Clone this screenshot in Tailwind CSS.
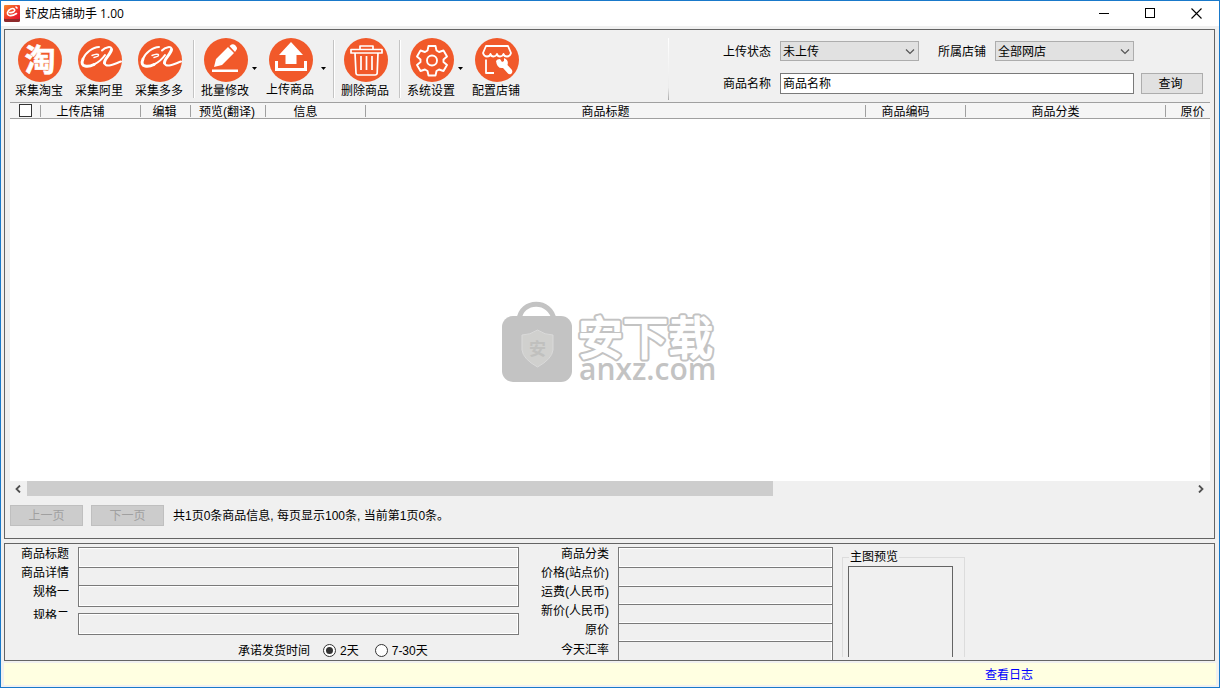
<!DOCTYPE html>
<html lang="zh-CN">
<head>
<meta charset="utf-8">
<title>虾皮店铺助手 1.00</title>
<script src="https://cdn.jsdelivr.net/npm/@tailwindcss/browser@4"></script>
</head>
<body class="flex min-h-screen flex-col border border-[#1979ca] bg-[#f0f0f0] font-['Liberation_Sans','Noto_Sans_CJK_SC',sans-serif] text-[12px] leading-[14px] text-black">

<header class="flex h-[25px] shrink-0 items-center bg-white pl-[3px]">
  <svg class="h-[17px] w-[16px]" viewBox="0 0 16 17" aria-hidden="true">
    <defs><linearGradient id="lg" x1="0" y1="0" x2="1" y2="1"><stop offset="0" stop-color="#f98a2c"/><stop offset=".55" stop-color="#f03a28"/><stop offset="1" stop-color="#e01030"/></linearGradient></defs>
    <rect y="2" width="16" height="15" rx="1.5" fill="#8e2a2c"/>
    <rect width="16" height="14" rx="1" fill="url(#lg)"/>
    <path d="M5.500 7.500C9 8 11.500 6 10.500 4.500C9 2.500 4.500 4 3.500 7.500C3 11.500 8 11.500 12.500 8.500M12 2L13 3" fill="none" stroke="#fff" stroke-width="1.600" stroke-linecap="round"/>
  </svg>
  <h1 class="ml-[5px] font-['Open_Sans','Noto_Sans_CJK_SC',sans-serif] text-[12px]">虾皮店铺助手 1.00</h1>
  <div class="ml-auto flex self-stretch">
    <button class="flex w-[45px] items-center justify-center" aria-label="最小化"><svg class="size-[11px]" viewBox="0 0 11 11" stroke="#000"><path d="M0 5.500H10"/></svg></button>
    <button class="flex w-[46px] items-center justify-center" aria-label="最大化"><svg class="size-[11px]" viewBox="0 0 11 11" fill="none" stroke="#000"><rect x=".5" y=".5" width="9" height="9"/></svg></button>
    <button class="flex w-[46px] items-center justify-center" aria-label="关闭"><svg class="size-[11px]" viewBox="0 0 11 11" stroke="#000" stroke-width="1.100"><path d="M.5 .5L10.500 10.500M10.500 .5L.5 10.500"/></svg></button>
  </div>
</header>

<main class="mx-[3px] mt-[3px] mr-[4px] flex grow flex-col border border-[#646464] px-[5px]">
  <div class="flex h-[72px] shrink-0 items-start">
    <nav class="flex items-start pt-2 pl-[5px]" aria-label="工具栏">
      <button class="flex w-[50px] flex-col items-center">
        <svg class="size-[44px]" viewBox="0 0 44 44" aria-hidden="true"><circle cx="22" cy="22" r="22" fill="#f1592a"/><text x="22" y="33" text-anchor="middle" font-size="31" font-weight="700" fill="#fff" stroke="#fff" stroke-width=".6" stroke-linejoin="round" font-family="Noto Sans CJK SC">淘</text></svg>
        <span class="mt-[2px] pr-[2px] whitespace-nowrap">采集淘宝</span>
      </button>
      <button class="ml-[10px] flex w-[50px] flex-col items-center">
        <svg class="size-[44px]" viewBox="0 0 44 44" aria-hidden="true"><circle cx="22" cy="22" r="22" fill="#f1592a"/><g id="ali" fill="none" stroke="#fff" stroke-linecap="round" stroke-linejoin="round"><path stroke-width="1.400" d="M14 17.500C17 16 21 15.500 20.500 17.500C20 18.500 18 19 16 19.500"/><path stroke-width="2" d="M21 9C15 9 7 15 5 21"/><path stroke-width="3" d="M5 21C1 30 11 29 16 26.500"/><path stroke-width="2" d="M16 26.500C20 24.500 24 21.500 27 17"/><path stroke-width="2" d="M24 12.500C27 9 34 7.500 33.500 11.500"/><path stroke-width="3" d="M33.500 11.500C33 16 26 21 26.500 25"/><path stroke-width="2" d="M26.500 25C28 30.500 36 26 43 23.500"/></g></svg>
        <span class="mt-[2px] pr-[2px] whitespace-nowrap">采集阿里</span>
      </button>
      <button class="ml-[10px] flex w-[50px] flex-col items-center">
        <svg class="size-[44px]" viewBox="0 0 44 44" aria-hidden="true"><circle cx="22" cy="22" r="22" fill="#f1592a"/><use href="#ali"/></svg>
        <span class="mt-[2px] pr-[2px] whitespace-nowrap">采集多多</span>
      </button>
      <span class="mr-[6px] ml-[8px] mt-[2px] h-[58px] w-[2px] border-r border-l border-r-white border-l-[#c4c4c4]"></span>
      <button class="flex w-[50px] flex-col items-center">
        <svg class="size-[44px]" viewBox="0 0 44 44" aria-hidden="true"><circle cx="22" cy="22" r="22" fill="#f1592a"/><path fill="#fff" d="M8 31.500H34V34H8ZM10 29L12 21L24 9L30 15L18 27ZM25.500 8L27.500 6.500Q29.500 5.500 31.500 7.500Q33.500 9.500 33 11L31 14Z"/></svg>
        <span class="mt-[2px] pr-[2px] whitespace-nowrap">批量修改</span>
      </button>
      <button class="flex h-[60px] w-[15px] items-center pl-[1px]" aria-label="批量修改选项"><svg class="h-[3px] w-[5px]" viewBox="0 0 5 3"><path d="M0 0H5L2.500 3Z"/></svg></button>
      <button class="flex w-[50px] flex-col items-center">
        <svg class="size-[44px]" viewBox="0 0 44 44" aria-hidden="true"><circle cx="22" cy="22" r="22" fill="#f1592a"/><path fill="#fff" d="M22 4L34 17H27.500V26H16.500V17H10ZM6 23H9V30H35V23H38V33H6Z"/></svg>
        <span class="mt-[1px] pr-[2px] whitespace-nowrap">上传商品</span>
      </button>
      <button class="flex h-[60px] w-[15px] items-center justify-center" aria-label="上传商品选项"><svg class="h-[3px] w-[5px]" viewBox="0 0 5 3"><path d="M0 0H5L2.500 3Z"/></svg></button>
      <span class="mr-[6px] ml-[2px] mt-[2px] h-[58px] w-[2px] border-r border-l border-r-white border-l-[#c4c4c4]"></span>
      <button class="flex w-[50px] flex-col items-center">
        <svg class="size-[44px]" viewBox="0 0 44 44" aria-hidden="true"><circle cx="22" cy="22" r="22" fill="#f1592a"/><path fill="none" stroke="#fff" stroke-width="1.700" stroke-linejoin="round" d="M7 11.500H38V15H7ZM16 11V8H29V11M11 15L12 35Q12.200 37 14 37H31Q33 37 33.200 35L34 15M17 18V32M22.500 18V32M28 18V32"/></svg>
        <span class="mt-[2px] pr-[2px] whitespace-nowrap">删除商品</span>
      </button>
      <span class="mr-[6px] ml-[8px] mt-[2px] h-[58px] w-[2px] border-r border-l border-r-white border-l-[#c4c4c4]"></span>
      <button class="flex w-[50px] flex-col items-center">
        <svg class="size-[44px]" viewBox="0 0 44 44" aria-hidden="true"><circle cx="22" cy="22" r="22" fill="#f1592a"/><g fill="none" stroke="#fff" stroke-width="1.900" stroke-linejoin="round"><path d="M18.500 8H25.500L26.500 12.500L29 14L33.500 12.500L37 18.500L33.500 21.500V24L37 27L33.500 33L29 31.500L26.500 33L25.500 37.500H18.500L17.500 33L15 31.500L10.500 33L7 27L10.500 24V21.500L7 18.500L10.500 12.500L15 14L17.500 12.500Z"/><circle cx="22" cy="22.500" r="5"/></g></svg>
        <span class="mt-[2px] pr-[2px] whitespace-nowrap">系统设置</span>
      </button>
      <button class="flex h-[60px] w-[15px] items-center pl-[1px]" aria-label="系统设置选项"><svg class="h-[3px] w-[5px]" viewBox="0 0 5 3"><path d="M0 0H5L2.500 3Z"/></svg></button>
      <button class="flex w-[50px] flex-col items-center">
        <svg class="size-[44px]" viewBox="0 0 44 44" aria-hidden="true"><circle cx="22" cy="22" r="22" fill="#f1592a"/><g fill="none" stroke="#fff" stroke-width="1.800" stroke-linejoin="round"><path d="M11 8H33L36 15Q35 18.500 32 18.500Q29 18.500 28.500 16Q27.500 18.500 25 18.500Q22.500 18.500 22 16Q21 18.500 18.500 18.500Q16 18.500 15.500 16Q15 18.500 12 18.500Q9 18.500 8 15ZM11 21.500V35H19"/></g><path fill="#fff" d="M21 23Q22 21 25 21L27 24L29 23L29 20Q34 22 32.500 27L37 32Q38 35 36 36Q34 37 32.500 35L28 30Q22 31 21 23Z"/></svg>
        <span class="mt-[2px] pr-[2px] whitespace-nowrap">配置店铺</span>
      </button>
    </nav>
    <form class="mr-[6px] ml-auto flex items-start" onsubmit="return false">
      <span class="mt-2 mr-[54px] h-[62px] w-px bg-linear-to-b from-white via-[#ebebeb] via-80% to-[#a8a8a8]"></span>
      <div class="mt-[11px] grid grid-cols-[57px_139px_19px_57px_139px_7px_62px] items-center gap-y-3">
        <label for="state" class="pt-px">上传状态</label>
        <div class="relative">
          <select id="state" class="block h-[20px] w-full appearance-none border border-[#adadad] bg-[#e1e1e1] px-[2px] pt-px"><option>未上传</option></select>
          <svg class="pointer-events-none absolute top-[8px] right-[4px] h-[6px] w-[10px]" viewBox="0 0 10 6" fill="none" stroke="#555" stroke-width="1.200"><path d="M1 .5L5 4.500L9 .5"/></svg>
        </div>
        <label for="shop" class="col-start-4 pt-px">所属店铺</label>
        <div class="relative">
          <select id="shop" class="block h-[20px] w-full appearance-none border border-[#adadad] bg-[#e1e1e1] px-[2px] pt-px"><option>全部网店</option></select>
          <svg class="pointer-events-none absolute top-[8px] right-[4px] h-[6px] w-[10px]" viewBox="0 0 10 6" fill="none" stroke="#555" stroke-width="1.200"><path d="M1 .5L5 4.500L9 .5"/></svg>
        </div>
        <label for="name" class="col-start-1">商品名称</label>
        <input id="name" type="text" value="商品名称" class="col-span-4 h-[21px] border border-[#7a7a7a] bg-white px-[2px] pb-[3px]">
        <button class="col-start-7 h-[21px] border border-[#adadad] bg-[#e1e1e1] pr-[3px]">查询</button>
      </div>
    </form>
  </div>

  <section class="relative mr-[-1px] flex grow flex-col overflow-hidden bg-white">
    <table class="w-[1209px] table-fixed border-collapse">
      <thead>
        <tr class="h-[16px] border-y border-[#a0a0a0] bg-[#f5f5f5]">
          <th class="w-[31px] p-0"><span class="flex h-[12px] items-center justify-center border-r border-[#a0a0a0]"><input type="checkbox" aria-label="全选" class="size-[13px] appearance-none border border-[#333] bg-white"></span></th>
          <th class="w-[100px] p-0 font-normal"><span class="flex h-[12px] items-center justify-center border-r border-[#a0a0a0] pt-[2px] pr-[20px]">上传店铺</span></th>
          <th class="w-[50px] p-0 font-normal"><span class="flex h-[12px] items-center justify-center border-r border-[#a0a0a0] pt-[2px] pr-[2px]">编辑</span></th>
          <th class="w-[75px] p-0 font-normal"><span class="flex h-[12px] items-center justify-center border-r border-[#a0a0a0] pt-[2px] pr-[2px] whitespace-nowrap">预览(翻译)</span></th>
          <th class="w-[100px] p-0 font-normal"><span class="flex h-[12px] items-center justify-center border-r border-[#a0a0a0] pt-[2px] pr-[20px]">信息</span></th>
          <th class="w-[500px] p-0 font-normal"><span class="flex h-[12px] items-center justify-center border-r border-[#a0a0a0] pt-[2px] pr-[20px]">商品标题</span></th>
          <th class="w-[100px] p-0 font-normal"><span class="flex h-[12px] items-center justify-center border-r border-[#a0a0a0] pt-[2px] pr-[20px]">商品编码</span></th>
          <th class="w-[200px] p-0 font-normal"><span class="flex h-[12px] items-center justify-center border-r border-[#a0a0a0] pt-[2px] pr-[20px]">商品分类</span></th>
          <th class="p-0 font-normal"><span class="flex h-[12px] items-center justify-center pt-[2px]">原价</span></th>
        </tr>
      </thead>
      <tbody></tbody>
    </table>
    <svg class="absolute top-[199px] left-1/2 -ml-[109px] h-[84px] w-[220px]" viewBox="0 0 220 84" role="img" aria-label="安下载 anxz.com">
      <path d="M18 19C20 -2 50 -2 53 19" fill="none" stroke="#c3c3c3" stroke-width="5"/>
      <rect x="1" y="15" width="70" height="66" rx="11" fill="#c3c3c3"/>
      <path d="M36.500 29Q44 34 52 34V49Q51 58 36.500 66Q22 58 21 49V34Q29 34 36.500 29Z" fill="#d0d0ce" stroke="#dadada"/>
      <text x="36.500" y="54" text-anchor="middle" font-size="17" font-weight="700" fill="#c0c0be" font-family="Noto Sans CJK SC">安</text>
      <g font-family="Noto Sans CJK SC" font-size="45" font-weight="400" stroke-linejoin="round">
        <text x="77" y="54" fill="#c3c3c3" stroke="#c3c3c3" stroke-width="6">安下载</text>
        <text x="77" y="54" fill="#fff" stroke="#fff" stroke-width="2" aria-hidden="true">安下载</text>
      </g>
      <text x="78" y="79" font-family="Open Sans" font-size="30" font-weight="600" fill="#c3c3c3">anxz.com</text>
    </svg>
  </section>

  <div class="flex h-[15px] shrink-0 items-center">
    <button class="flex w-[17px] items-center justify-center pr-[2px]" aria-label="向左滚动"><svg class="h-[8px] w-[6px]" viewBox="0 0 6 8" fill="none" stroke="#505050" stroke-width="1.800"><path d="M5 .5L1.500 4L5 7.500"/></svg></button>
    <div class="h-[15px] grow"><div class="h-full bg-[#cdcdcd]" style="width:64%"></div></div>
    <button class="flex w-[17px] items-center justify-center" aria-label="向右滚动"><svg class="h-[8px] w-[6px]" viewBox="0 0 6 8" fill="none" stroke="#505050" stroke-width="1.800"><path d="M1 .5L4.500 4L1 7.500"/></svg></button>
  </div>

  <div class="mt-[9px] mb-3 flex shrink-0 items-center">
    <button disabled class="h-[21px] w-[73px] border border-[#bfbfbf] bg-[#cccccc] text-[#a0a0a0]">上一页</button>
    <button disabled class="ml-2 h-[21px] w-[73px] border border-[#bfbfbf] bg-[#cccccc] text-[#a0a0a0]">下一页</button>
    <p class="ml-[9px]">共1页0条商品信息, 每页显示100条, 当前第1页0条。</p>
  </div>
</main>

<section class="mt-[4px] mr-[4px] ml-[3px] flex h-[118px] shrink-0 overflow-hidden border border-[#646464]">
  <div class="w-[514px]">
    <div class="flex">
      <div class="flex w-[64px] flex-col pt-px text-right leading-[19px]">
        <label for="f1" class="h-[19px]">商品标题</label>
        <label for="f2" class="h-[19px]">商品详情</label>
        <label for="f3" class="h-[19px]">规格一</label>
        <label for="f4" class="mt-[7px] h-[10px] overflow-hidden leading-[14px]">规格二</label>
      </div>
      <div class="mt-[3px] ml-[9px] flex grow flex-col">
        <input id="f1" type="text" class="h-[21px] border border-[#7a7a7a] px-1 shadow-[inset_0_0_0_1px_#fff]">
        <input id="f2" type="text" class="h-[18px] border-x border-b border-[#7a7a7a] px-1 shadow-[inset_-1px_0_0_#fff]">
        <input id="f3" type="text" class="h-[21px] border-x border-b border-[#7a7a7a] px-1 shadow-[inset_0_0_0_1px_#fff]">
        <input id="f4" type="text" class="mt-[6px] h-[22px] border border-[#7a7a7a] px-1 shadow-[inset_0_0_0_1px_#fff]">
      </div>
    </div>
    <fieldset class="mt-[8px] flex items-center">
      <legend class="sr-only">发货时间</legend>
      <span class="ml-[233px]">承诺发货时间</span>
      <input id="d2" type="radio" name="days" checked class="ml-[13px] size-[13px] appearance-none rounded-full border border-[#333] bg-white bg-radial from-[#333] from-50% to-white to-60% bg-[length:11px_11px] bg-center shadow-[inset_0_0_0_2px_#fff]">
      <label for="d2" class="ml-1 pt-px">2天</label>
      <input id="d30" type="radio" name="days" class="ml-4 size-[13px] appearance-none rounded-full border border-[#333] bg-white">
      <label for="d30" class="ml-1 pt-px">7-30天</label>
    </fieldset>
  </div>
  <div class="flex w-[90px] flex-col pt-px text-right leading-[19px]">
    <label for="g1" class="h-[19px]">商品分类</label>
    <label for="g2" class="h-[19px]">价格(站点价)</label>
    <label for="g3" class="h-[19px]">运费(人民币)</label>
    <label for="g4" class="h-[19px]">新价(人民币)</label>
    <label for="g5" class="h-[19px]">原价</label>
    <label for="g6" class="mt-[1px] h-[19px]">今天汇率</label>
  </div>
  <div class="mt-[3px] ml-[9px] flex w-[215px] flex-col">
    <input id="g1" type="text" class="h-[21px] border border-[#7a7a7a] px-1 shadow-[inset_0_0_0_1px_#fff]">
    <input id="g2" type="text" class="h-[19px] border-x border-b border-[#7a7a7a] px-1 shadow-[inset_-1px_-1px_0_#fff]">
    <input id="g3" type="text" class="h-[19px] border-x border-b border-[#7a7a7a] px-1 shadow-[inset_-1px_-1px_0_#fff]">
    <input id="g4" type="text" class="h-[19px] border-x border-b border-[#7a7a7a] px-1 shadow-[inset_-1px_-1px_0_#fff]">
    <input id="g5" type="text" class="h-[18px] border-x border-b border-[#7a7a7a] px-1 shadow-[inset_-1px_-1px_0_#fff]">
    <input id="g6" type="text" class="h-[18px] border-x border-[#7a7a7a] px-1 shadow-[inset_-1px_0_0_#fff]">
  </div>
  <fieldset class="mt-[6px] mb-[3px] ml-[9px] w-[123px] border border-b-0 border-[#dcdcdc]">
    <legend class="ml-[6px] px-px">主图预览</legend>
    <div class="mt-[2px] ml-[5px] h-[91px] w-[105px] border border-b-0 border-[#646464]"></div>
  </fieldset>
</section>

<footer class="mx-[3px] mt-[2px] mb-[2px] flex h-[22px] shrink-0 items-center justify-end bg-[#ffffe1] pt-[2px] pr-[183px]">
  <a href="#log" class="text-[#0000ff]">查看日志</a>
</footer>
</body>
</html>
